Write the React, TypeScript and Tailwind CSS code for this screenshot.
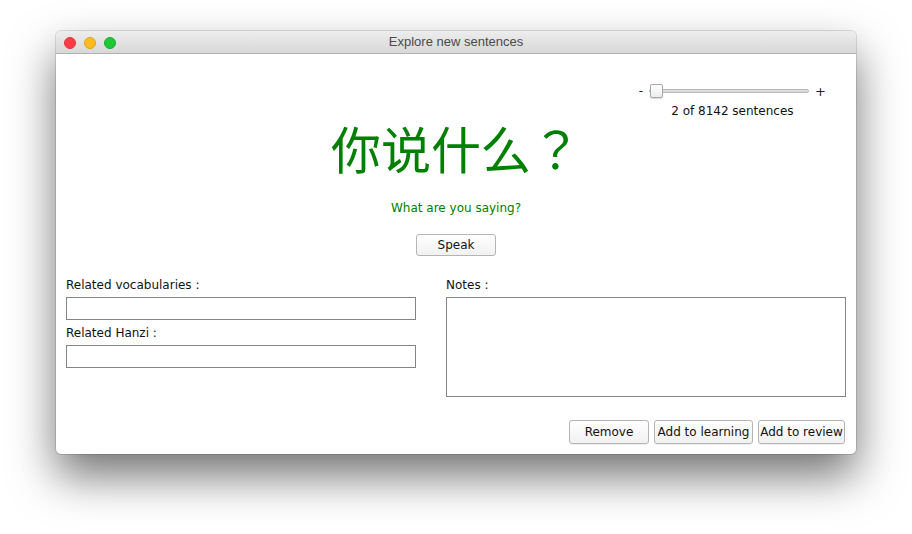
import React from "react";

const ui = { fontFamily: '"DejaVu Sans", "Liberation Sans", sans-serif' };

function MacButton({ label, w }: { label: string; w: string }) {
  return (
    <button
      className={`${w} h-[24px] rounded-[3px] border border-[#b4b4b4] bg-gradient-to-b from-white to-[#f1f1f1] text-[12px] text-[#111] shadow-[0_1px_0_rgba(0,0,0,0.06)]`}
      style={ui}
    >
      {label}
    </button>
  );
}

export default function App() {
  return (
    <div className="w-[912px] h-[534px] bg-white pt-[31px] pl-[56px] overflow-hidden">
      <div className="w-[800px] h-[423px] rounded-[5px] bg-white flex flex-col shadow-[0_22px_45px_rgba(0,0,0,0.55),0_0_0_1px_rgba(0,0,0,0.12)]">
        {/* Title bar */}
        <div className="relative h-[23px] rounded-t-[5px] bg-gradient-to-b from-[#ededed] to-[#d8d8d8] border-b border-[#b1b1b1] flex items-center justify-center">
          <div className="absolute left-[8px] top-[6px] flex gap-[8px]">
            <span className="w-[12px] h-[12px] rounded-full bg-[#fc3d46] border border-[#e0333b]" />
            <span className="w-[12px] h-[12px] rounded-full bg-[#fdbb23] border border-[#e1a11a]" />
            <span className="w-[12px] h-[12px] rounded-full bg-[#1fc839] border border-[#18ac2e]" />
          </div>
          <span className="text-[13px] text-[#4a4a4a]" style={{ fontFamily: '"Liberation Sans", Arial, sans-serif' }}>
            Explore new sentences
          </span>
        </div>

        {/* Content */}
        <div className="flex-1 flex flex-col px-[10px]">
          <div className="flex justify-end pr-[20px] pt-[30px]">
            <div className="flex flex-col items-center">
              <div className="flex items-center h-[14px]">
                <span className="text-[12px] leading-none text-[#222] mr-[6px]" style={ui}>-</span>
                <div className="relative w-[160px] h-[14px] flex items-center">
                  <div className="w-full h-[4px] rounded-[2px] bg-[#dcdcdc] border border-[#b9b9b9]" />
                  <div className="absolute left-[1px] top-0 w-[13px] h-[14px] rounded-[2px] border border-[#a8a8a8] bg-gradient-to-b from-white to-[#ececec] shadow-[0_1px_1px_rgba(0,0,0,0.15)]" />
                </div>
                <span className="text-[13px] leading-none text-[#222] ml-[6px]" style={ui}>+</span>
              </div>
              <div className="mt-[5px] text-[12px] leading-[16px] text-[#111]" style={ui}>
                2 of 8142 sentences
              </div>
            </div>
          </div>

          <div
            className="text-center text-[50px] leading-[56px] text-[#008000]"
            style={{ fontFamily: '"Noto Sans CJK JP", "Noto Sans CJK SC", sans-serif' }}
          >
            你说什么？
          </div>

          <div className="text-center text-[12px] leading-[16px] text-[#008000] mt-[25px]" style={ui}>
            What are you saying?
          </div>

          <div className="flex justify-center mt-[18px]">
            <button
              className="w-[80px] h-[22px] rounded-[3px] border border-[#b4b4b4] bg-gradient-to-b from-white to-[#f1f1f1] text-[12px] text-[#111]"
              style={ui}
            >
              Speak
            </button>
          </div>

          <div className="flex gap-[30px] mt-[21px]">
            <div className="w-[350px] flex flex-col">
              <div className="text-[12px] leading-[16px] text-[#111]" style={ui}>Related vocabularies :</div>
              <input className="mt-[4px] h-[23px] border border-[#858585] bg-white outline-none" />
              <div className="mt-[5px] text-[12px] leading-[16px] text-[#111]" style={ui}>Related Hanzi :</div>
              <input className="mt-[4px] h-[23px] border border-[#858585] bg-white outline-none" />
            </div>
            <div className="flex-1 flex flex-col">
              <div className="text-[12px] leading-[16px] text-[#111]" style={ui}>Notes :</div>
              <textarea className="mt-[4px] h-[100px] border border-[#858585] bg-white outline-none resize-none" />
            </div>
          </div>

          <div className="flex justify-end gap-[5px] mt-[23px] pr-[1px]">
            <MacButton label="Remove" w="w-[80px]" />
            <MacButton label="Add to learning" w="w-[99px]" />
            <MacButton label="Add to review" w="w-[87px]" />
          </div>
        </div>
      </div>
    </div>
  );
}
